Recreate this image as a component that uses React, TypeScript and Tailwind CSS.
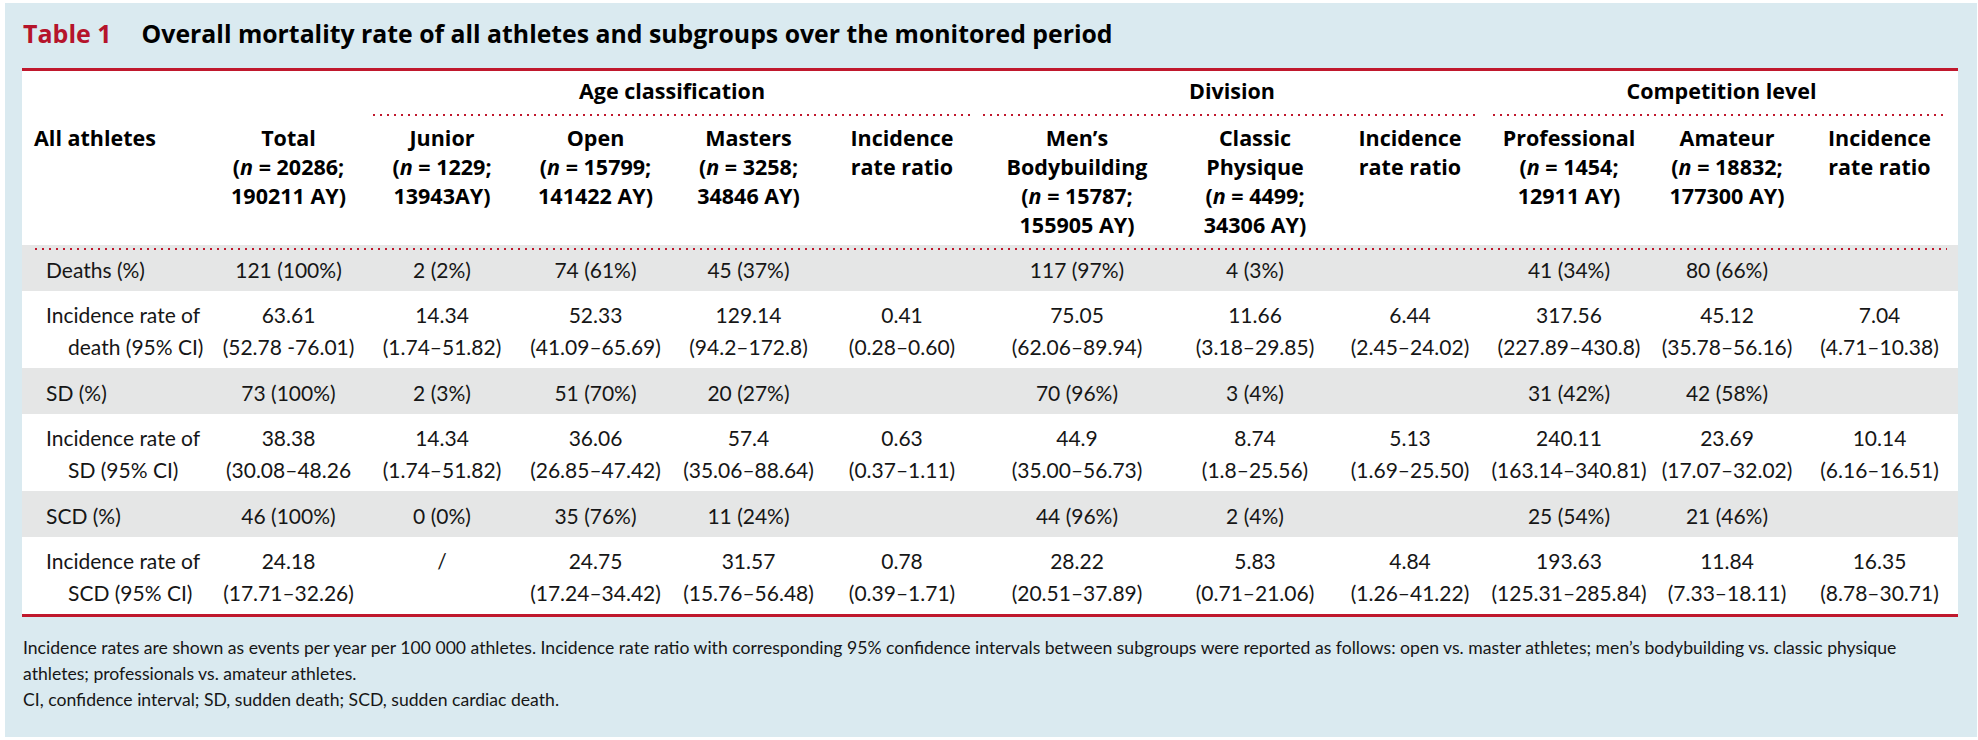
import React from "react";

const COLS =
  "grid grid-cols-[190px_153px_154px_153px_153px_154px_196px_160px_150px_168px_148px_157px]";

const Dots = ({ className }: { className?: string }) => (
  <div
    className={
      "h-[2px] bg-[repeating-linear-gradient(90deg,#c0182d_0px,#c0182d_2px,transparent_2px,transparent_7px)] " +
      (className ?? "")
    }
  />
);

const N = ({ v, ay }: { v: string; ay: string }) => (
  <>
    (<i>n</i> = {v};
    <br />
    {ay}
  </>
);

const headers: React.ReactNode[] = [
  <>Total<br /><N v="20286" ay="190211 AY)" /></>,
  <>Junior<br /><N v="1229" ay="13943AY)" /></>,
  <>Open<br /><N v="15799" ay="141422 AY)" /></>,
  <>Masters<br /><N v="3258" ay="34846 AY)" /></>,
  <>Incidence<br />rate ratio</>,
  <>Men’s<br />Bodybuilding<br /><N v="15787" ay="155905 AY)" /></>,
  <>Classic<br />Physique<br /><N v="4499" ay="34306 AY)" /></>,
  <>Incidence<br />rate ratio</>,
  <>Professional<br /><N v="1454" ay="12911 AY)" /></>,
  <>Amateur<br /><N v="18832" ay="177300 AY)" /></>,
  <>Incidence<br />rate ratio</>,
];

type RowData = { label: string[]; values: string[][]; gray?: boolean };

const rows: RowData[] = [
  {
    gray: true,
    label: ["Deaths (%)"],
    values: [["121 (100%)"], ["2 (2%)"], ["74 (61%)"], ["45 (37%)"], [], ["117 (97%)"], ["4 (3%)"], [], ["41 (34%)"], ["80 (66%)"], []],
  },
  {
    label: ["Incidence rate of", "death (95% CI)"],
    values: [
      ["63.61", "(52.78 -76.01)"],
      ["14.34", "(1.74–51.82)"],
      ["52.33", "(41.09–65.69)"],
      ["129.14", "(94.2–172.8)"],
      ["0.41", "(0.28–0.60)"],
      ["75.05", "(62.06–89.94)"],
      ["11.66", "(3.18–29.85)"],
      ["6.44", "(2.45–24.02)"],
      ["317.56", "(227.89–430.8)"],
      ["45.12", "(35.78–56.16)"],
      ["7.04", "(4.71–10.38)"],
    ],
  },
  {
    gray: true,
    label: ["SD (%)"],
    values: [["73 (100%)"], ["2 (3%)"], ["51 (70%)"], ["20 (27%)"], [], ["70 (96%)"], ["3 (4%)"], [], ["31 (42%)"], ["42 (58%)"], []],
  },
  {
    label: ["Incidence rate of", "SD (95% CI)"],
    values: [
      ["38.38", "(30.08–48.26"],
      ["14.34", "(1.74–51.82)"],
      ["36.06", "(26.85–47.42)"],
      ["57.4", "(35.06–88.64)"],
      ["0.63", "(0.37–1.11)"],
      ["44.9", "(35.00–56.73)"],
      ["8.74", "(1.8–25.56)"],
      ["5.13", "(1.69–25.50)"],
      ["240.11", "(163.14–340.81)"],
      ["23.69", "(17.07–32.02)"],
      ["10.14", "(6.16–16.51)"],
    ],
  },
  {
    gray: true,
    label: ["SCD (%)"],
    values: [["46 (100%)"], ["0 (0%)"], ["35 (76%)"], ["11 (24%)"], [], ["44 (96%)"], ["2 (4%)"], [], ["25 (54%)"], ["21 (46%)"], []],
  },
  {
    label: ["Incidence rate of", "SCD (95% CI)"],
    values: [
      ["24.18", "(17.71–32.26)"],
      ["/"],
      ["24.75", "(17.24–34.42)"],
      ["31.57", "(15.76–56.48)"],
      ["0.78", "(0.39–1.71)"],
      ["28.22", "(20.51–37.89)"],
      ["5.83", "(0.71–21.06)"],
      ["4.84", "(1.26–41.22)"],
      ["193.63", "(125.31–285.84)"],
      ["11.84", "(7.33–18.11)"],
      ["16.35", "(8.78–30.71)"],
    ],
  },
];

const Lines = ({ lines }: { lines: string[] }) => (
  <>
    {lines.map((l, i) => (
      <React.Fragment key={i}>
        {i > 0 && <br />}
        {l}
      </React.Fragment>
    ))}
  </>
);

function DataRow({ row, first }: { row: RowData; first: boolean }) {
  const cells = (
    <div className={COLS + (row.gray ? (first ? " pt-[4px] pb-[5px]" : " pt-[9px] pb-[5px]") : " pt-[8px] pb-[5px]")}>
      {row.gray ? (
        <div className="pl-[24px] whitespace-nowrap">{row.label[0]}</div>
      ) : (
        <div className="pl-[46px] indent-[-22px] whitespace-nowrap">
          <Lines lines={row.label} />
        </div>
      )}
      {row.values.map((v, i) => (
        <div key={i} className="text-center whitespace-nowrap">
          <Lines lines={v} />
        </div>
      ))}
    </div>
  );
  if (row.gray) {
    return (
      <div className={"bg-[#e5e6e6]" + (first ? " pt-[3px]" : "")}>
        {first && <Dots className="ml-[13px] mr-[11px]" />}
        {cells}
      </div>
    );
  }
  return cells;
}

export default function App() {
  return (
    <div className="w-[1978px] h-[740px] bg-white pt-[3px] pl-[5px]">
      <div className="w-[1972px] h-[734px] bg-[#daeaf0] pl-[17px] pt-[15px] font-['Lato',sans-serif] text-[#161616]">
        <h1 className="flex items-center h-[30px] pl-[1px] font-['Open_Sans',sans-serif] text-[25px] leading-[30px] font-bold whitespace-nowrap">
          <span className="text-[#b5142b] mr-[30px]">Table 1</span>
          <span className="text-black text-[24.8px]">Overall mortality rate of all athletes and subgroups over the monitored period</span>
        </h1>

        <div className="mt-[20px] w-[1936px] bg-white border-y-[3px] border-[#c0182d] text-[21px] leading-[32px]">
          <div className={COLS + " pt-[5px] font-['Open_Sans',sans-serif] font-bold text-[21.5px] leading-[29px] text-black"}>
            <div className="col-span-2" />
            <div className="col-span-4">
              <div className="text-center">Age classification</div>
              <Dots className="mt-[9px] ml-[8px] mr-[9px]" />
            </div>
            <div className="col-span-3">
              <div className="text-center">Division</div>
              <Dots className="mt-[9px] ml-[4px] mr-[8px]" />
            </div>
            <div className="col-span-3">
              <div className="text-center">Competition level</div>
              <Dots className="mt-[9px] ml-[8px] mr-[10px]" />
            </div>
          </div>

          <div className={COLS + " pt-[7px] pb-[6px] font-['Open_Sans',sans-serif] font-bold text-[21.5px] leading-[29px] text-black"}>
            <div className="pl-[12px] whitespace-nowrap">All athletes</div>
            {headers.map((h, i) => (
              <div key={i} className="text-center whitespace-nowrap">
                {h}
              </div>
            ))}
          </div>

          {rows.map((r, i) => (
            <DataRow key={i} row={r} first={i === 0} />
          ))}
        </div>

        <div className="mt-[18px] pl-[1px] text-[17.6px] leading-[26px]">
          <div className="whitespace-nowrap">
            Incidence rates are shown as events per year per 100 000 athletes. Incidence rate ratio with corresponding 95% confidence intervals between subgroups were reported as follows: open vs. master athletes; men’s bodybuilding vs. classic physique
          </div>
          <div className="whitespace-nowrap">athletes; professionals vs. amateur athletes.</div>
          <div className="whitespace-nowrap">CI, confidence interval; SD, sudden death; SCD, sudden cardiac death.</div>
        </div>
      </div>
    </div>
  );
}
